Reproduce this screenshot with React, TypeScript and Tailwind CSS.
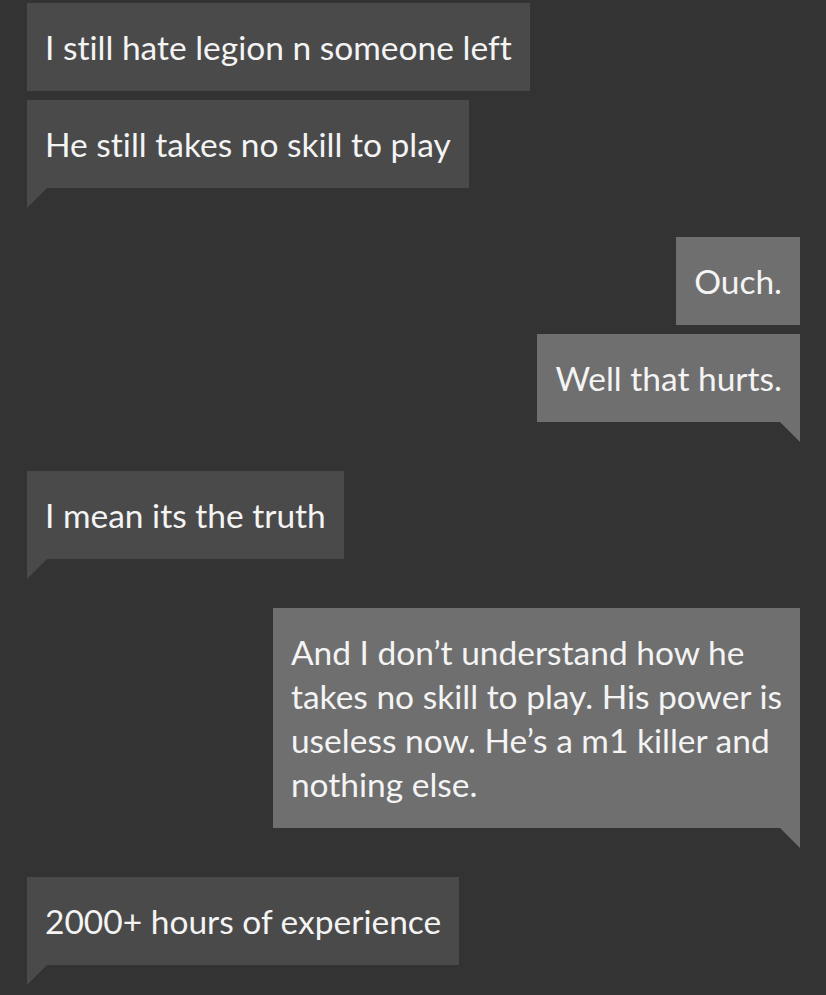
import type { ReactNode } from "react"

type Msg = { id: number; mine: boolean; tail: boolean; gap: boolean; text: ReactNode }

const messages: Msg[] = [
  { id: 1, mine: false, tail: false, gap: false, text: "I still hate legion n someone left" },
  { id: 2, mine: false, tail: true, gap: false, text: "He still takes no skill to play" },
  { id: 3, mine: true, tail: false, gap: true, text: "Ouch." },
  { id: 4, mine: true, tail: true, gap: false, text: "Well that hurts." },
  { id: 5, mine: false, tail: true, gap: true, text: "I mean its the truth" },
  {
    id: 6,
    mine: true,
    tail: true,
    gap: true,
    text: (
      <>
        And I don’t understand how he
        <br />
        takes no skill to play. His power is
        <br />
        useless now. He’s a m1 killer and
        <br />
        nothing else.
      </>
    ),
  },
  { id: 7, mine: false, tail: true, gap: true, text: "2000+ hours of experience" },
]

function Bubble({ msg }: { msg: Msg }) {
  return (
    <div
      className={`relative px-[18px] py-[22px] text-[33.5px] leading-[44px] text-[#f4f4f4] [font-variant-ligatures:none] ${
        msg.mine ? "self-end bg-[#6f6f6f]" : "self-start bg-[#4a4a4a]"
      } ${msg.gap ? "mt-[49px]" : "mt-[9px] first:mt-0"}`}
    >
      {msg.text}
      {msg.tail && msg.mine && (
        <span className="absolute right-0 top-full h-[20px] w-[20px] bg-[#6f6f6f] [clip-path:polygon(0_0,100%_0,100%_100%)]" />
      )}
      {msg.tail && !msg.mine && (
        <span className="absolute left-0 top-full h-[20px] w-[20px] bg-[#4a4a4a] [clip-path:polygon(0_0,100%_0,0_100%)]" />
      )}
    </div>
  )
}

export default function App() {
  return (
    <div className="min-h-screen bg-[#333333] font-['Lato',sans-serif]">
      <div className="flex flex-col pl-[27px] pr-[26px] pt-[3px] pb-10">
        {messages.map((m) => (
          <Bubble key={m.id} msg={m} />
        ))}
      </div>
    </div>
  )
}
